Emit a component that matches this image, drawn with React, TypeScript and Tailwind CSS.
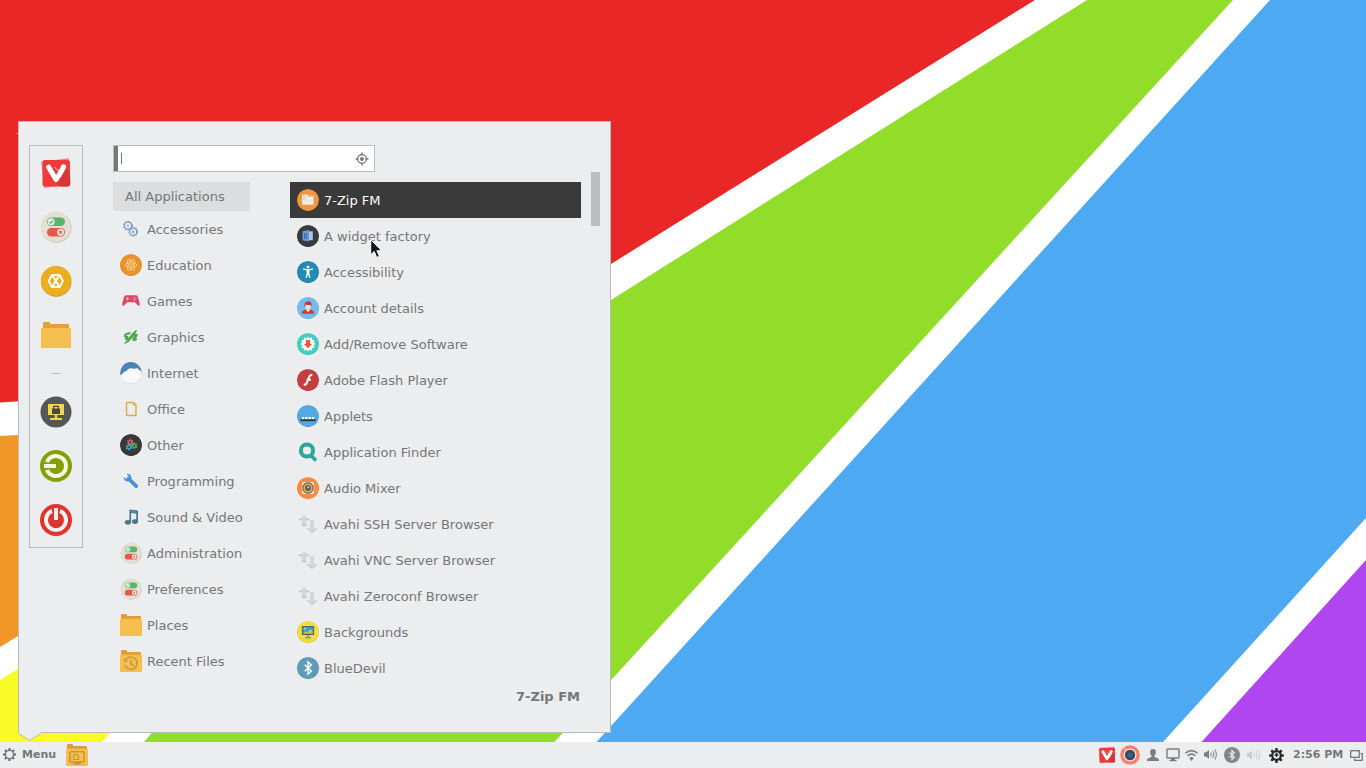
import React from "react";

type IconProps = { size?: number };

const Svg = ({ size = 22, box = 22, children }: { size?: number; box?: number; children: React.ReactNode }) => (
  <svg width={size} height={size} viewBox={`0 0 ${box} ${box}`} className="block shrink-0" fill="none">
    {children}
  </svg>
);

const gearPath = (cx: number, cy: number, inner: number, outer: number, teeth: number) => {
  const pts: string[] = [];
  for (let i = 0; i < teeth; i++) {
    const a = (i / teeth) * Math.PI * 2 - Math.PI / 2;
    const w = Math.PI / teeth;
    [[-0.62, inner], [-0.38, outer], [0.38, outer], [0.62, inner]].forEach(([k, r]) => {
      pts.push(`${(cx + Math.cos(a + k * w) * r).toFixed(2)},${(cy + Math.sin(a + k * w) * r).toFixed(2)}`);
    });
  }
  return `M${pts.join("L")}Z`;
};

const holePath = (cx: number, cy: number, r: number) =>
  `M${cx + r} ${cy}a${r} ${r} 0 1 0 ${-2 * r} 0 ${r} ${r} 0 1 0 ${2 * r} 0Z`;

const Vivaldi = ({ size = 32 }: IconProps) => (
  <Svg size={size} box={32}>
    <path d="M1.2 4.800 28.800 1.300 30.800 27 4.200 31Z" fill="#f28583" />
    <rect x="2.500" y="3" width="27.500" height="26.500" rx="2.500" fill="#ee3a3b" />
    <path d="M25.500 11 30 15.500v11.500q0 2.500-2.500 2.500H20L16.500 25Z" fill="#d93437" />
    <path d="M8.700 10.200 16 22.600Q19.500 18 22.600 12" stroke="#fff" strokeWidth="5" strokeLinecap="round" strokeLinejoin="round" />
    <circle cx="23.400" cy="9.900" r="2.700" fill="#fff" />
    <path d="M14.500 10q3.500 5.200 7.500 3" stroke="#fff" strokeWidth=".8" />
  </Svg>
);

const Toggles = ({ size = 22 }: IconProps) => (
  <Svg size={size} box={32}>
    <circle cx="16.4" cy="16.6" r="15.2" fill="#c8c7bd" />
    <circle cx="15.9" cy="15.8" r="15" fill="#e2e0d3" />
    <rect x="7" y="6.500" width="18" height="8.500" rx="4.200" fill="#57b66c" />
    <circle cx="11.200" cy="10.800" r="3.500" fill="#eaf2e6" />
    <path d="m9.500 10.800 1.300 1.400 2.300-2.700" stroke="#57b66c" strokeWidth="1.200" />
    <rect x="7" y="17" width="18" height="8.500" rx="4.200" fill="#eb564b" />
    <circle cx="20.600" cy="21.300" r="3.500" fill="#f8e6e1" />
    <path d="m19.200 19.900 2.800 2.800m0-2.800-2.800 2.800" stroke="#eb564b" strokeWidth="1.200" />
  </Svg>
);

const HexX = () => (
  <Svg size={32} box={32}>
    <circle cx="16.2" cy="16.5" r="15.3" fill="#c8941f" />
    <circle cx="16" cy="15.9" r="15" fill="#ebae1c" />
    <path d="M8.700 16 12 10h7.600L22.900 16l-3.300 6H12Z" stroke="#fff" strokeWidth="2" strokeLinejoin="round" />
    <path d="m12.200 10 7.200 12m0-12-7.200 12" stroke="#fff" strokeWidth="2" />
  </Svg>
);

const BigFolder = () => (
  <Svg size={32} box={32}>
    <path d="M3 4q0-1 1-1h5q1 0 1 1v1h18q1 0 1 1v4H3Z" fill="#e79f3b" />
    <rect x="1" y="9" width="30" height="20" rx="1.200" fill="#f4bf4f" />
  </Svg>
);

const LockScreen = () => (
  <Svg size={32} box={32}>
    <circle cx="16" cy="16" r="15.500" fill="#565656" />
    <path d="M8 8h16v11H8Zm6.800 11h2.400v3H22v2H10v-2h4.800Z" fill="#f3d653" />
    <path d="M12 12.500h8V18h-8Z" fill="#474747" />
    <path d="M13.700 13v-2.600h4.600V13" stroke="#474747" strokeWidth="1.300" />
  </Svg>
);

const Logout = () => (
  <Svg size={32} box={32}>
    <circle cx="16" cy="16" r="16" fill="#859f05" />
    <path d="M6.830 12A10 10 0 1 1 6.830 20" stroke="#f4f8e4" strokeWidth="4" />
    <path d="M4 14h12v4H4Z" fill="#f4f8e4" />
  </Svg>
);

const Power = () => (
  <Svg size={32} box={32}>
    <circle cx="16" cy="16" r="16" fill="#dd3530" />
    <path d="M12 6.830A10 10 0 1 0 20 6.830" stroke="#fdf0ef" strokeWidth="4" />
    <path d="M14 4h4v12h-4Z" fill="#fdf0ef" />
  </Svg>
);

const Gears = () => (
  <Svg>
    <circle cx="8" cy="7.700" r="3.500" stroke="#7ea0c8" strokeWidth="1.200" />
    <circle cx="8" cy="7.700" r="4.400" stroke="#7ea0c8" strokeWidth="1.100" strokeDasharray="1.500 1.330" />
    <circle cx="8" cy="7.700" r="1" fill="#7ea0c8" />
    <circle cx="13.200" cy="13.700" r="3.500" stroke="#7ea0c8" strokeWidth="1.200" />
    <circle cx="13.200" cy="13.700" r="4.400" stroke="#7ea0c8" strokeWidth="1.100" strokeDasharray="1.500 1.330" />
    <circle cx="13.200" cy="13.700" r="1.200" fill="#7ea0c8" />
  </Svg>
);

const Disc = ({ color, shade, children }: { color: string; shade?: string; children?: React.ReactNode }) => (
  <Svg>
    <circle cx="11" cy="11.200" r="10.800" fill={shade ?? color} />
    <circle cx="11" cy="10.800" r="10.600" fill={color} />
    {children}
  </Svg>
);

const Education = () => (
  <Disc color="#e8932b" shade="#d98721">
    <g stroke="#f8cf94" strokeWidth="0.900">
      <ellipse cx="11" cy="11" rx="5.800" ry="2.400" />
      <ellipse cx="11" cy="11" rx="5.800" ry="2.400" transform="rotate(60 11 11)" />
      <ellipse cx="11" cy="11" rx="5.800" ry="2.400" transform="rotate(120 11 11)" />
    </g>
    <circle cx="11" cy="11" r="1" fill="#f8cf94" />
  </Disc>
);

const Games = () => (
  <Svg>
    <path d="M6 5.300h10q1.500 0 2.100 2l1.500 6q.6 2.700-.7 2.700-1 0-2.700-2.400l-1.300-1.400H7.100l-1.300 1.400Q4 16 3 16q-1.300 0-.7-2.700l1.600-6q.6-2 2.100-2Z" fill="#d84a63" />
    <path d="M7.400 7.300v3M5.900 8.800h3" stroke="#f4cbd2" strokeWidth="0.900" />
    <circle cx="14.500" cy="7.500" r=".6" fill="#f4cbd2" />
    <circle cx="13.200" cy="8.900" r=".6" fill="#f4cbd2" />
    <circle cx="15.800" cy="8.900" r=".6" fill="#f4cbd2" />
    <circle cx="14.500" cy="10.200" r=".6" fill="#f4cbd2" />
  </Svg>
);

const Graphics = () => (
  <Svg>
    <path d="M16.500 4.300Q12 8 9 12.500L5.500 17q3.500-1.300 5-4.200Q14 8.500 16.500 4.300Z" fill="#4ca94f" stroke="#4ca94f" strokeWidth="1.200" />
    <path d="M10.500 7Q6 7.500 5 9.300t3.300 1.500Q5 12 6 13.200q2.500.600 5-1.200M13 9q4-1.300 3.700.300-.3 1.500-3.500 2.200M12.500 12.500q3.500-.800 3.500.5t-3.500.800" stroke="#4ca94f" strokeWidth="2" />
  </Svg>
);

const Internet = () => (
  <Svg>
    <circle cx="11.100" cy="11.500" r="10.500" fill="#cfcfcf" />
    <path d="M.5 13.200A10.700 10.700 0 1 1 21.600 11.500L11 14Z" fill="#4f82b8" />
    <path d="M.53 13q2.200-.3 2.800-2.500Q5 9 6.500 9 7.500 6.500 11 6.300q1.800-.2 2.800.700 2-1.200 4-.6 1 .5 1.200 1.700 2 .2 2.700 2.700A10.700 10.700 0 0 1 .53 13Z" fill="#f8f8f8" />
  </Svg>
);

const Office = () => (
  <Svg>
    <path d="M6.500 5.500q0-1 1-1h6l2.500 2.500v9.500q0 1-1 1H7.500q-1 0-1-1Z" stroke="#dfa845" strokeWidth="1.400" />
    <path d="M13 4.500V7.500H16Z" fill="#dfa845" />
  </Svg>
);

const Other = () => (
  <Disc color="#383838" shade="#2e2e2e">
    <path fillRule="evenodd" d={gearPath(10.200, 8.200, 2.400, 3.400, 6) + holePath(10.200, 8.200, 1)} fill="#e45d6c" />
    <path fillRule="evenodd" d={gearPath(8.800, 13.200, 2.400, 3.400, 6) + holePath(8.800, 13.200, 1)} fill="#31a6d6" />
    <path fillRule="evenodd" d={gearPath(14.200, 11.700, 2.400, 3.400, 6) + holePath(14.200, 11.700, 1)} fill="#4bb556" />
  </Disc>
);

const Wrench = () => (
  <Svg>
    <path d="m8.500 8.500 7.700 7.700" stroke="#4a90d6" strokeWidth="3.800" strokeLinecap="round" />
    <path d="M6.500 3.900q4.400-.4 5 4.100-.2 3.400-3.400 3.600Q4 11.300 3.500 7l2.700 2 2.300-.7.500-2Z" fill="#4a90d6" />
  </Svg>
);

const Music = () => (
  <Svg>
    <path d="M9.400 3.600 18 4.500v10.900h-1.700V7.800l-5.200-.7v10H9.400Z" fill="#48778c" />
    <ellipse cx="7.900" cy="16.300" rx="3.100" ry="2.400" fill="#48778c" />
    <ellipse cx="15" cy="15.600" rx="3" ry="2.400" fill="#48778c" />
    <path d="m11 5.500 5.300.7" stroke="#8cabb8" strokeWidth=".6" />
  </Svg>
);

const Folder = ({ children }: { children?: React.ReactNode }) => (
  <Svg>
    <path d="M1 1q0-1 1-1h4q1 0 1 1v1h13q1 0 1 1v4H1Z" fill="#e39d37" />
    <rect x="0" y="4.800" width="22" height="17.200" rx="1.200" fill="#f4bf4f" />
    {children}
  </Svg>
);

const Recent = () => (
  <Folder>
    <path d="M5.500 10.100A6.200 6.200 0 1 1 5 15.200" stroke="#cb9b3c" strokeWidth="1.700" />
    <path d="M3.800 7.700v4.200H8Z" fill="#cb9b3c" />
    <path d="M11 9.800v4l2.700 2" stroke="#cb9b3c" strokeWidth="1.700" />
  </Folder>
);

const DesktopFolder = () => (
  <Folder>
    <rect x="3.800" y="7.800" width="14.400" height="10.200" rx="1.200" stroke="#c5973a" strokeWidth="1.600" />
    <path d="M7.500 18h7v2.500h-7Z" fill="#c5973a" />
    <path d="M7.800 10.500h3l1.700 1.800v3.200H7.800Z" stroke="#c5973a" strokeWidth="1.200" />
  </Folder>
);

const Zip = () => (
  <Disc color="#ed9840" shade="#d98732">
    <path d="M5 6.300q0-.8.800-.8h4.700l1 1.300h5v8q0 1-1 1H5.800q-.8 0-.8-1Z" fill="#f2ebe3" />
    <path d="M6.800 6v5.500M8.600 6.500v5" stroke="#c9b49c" strokeWidth="1" strokeDasharray="1 1" />
    <path d="M10.500 7.600h6" stroke="#dcc5ab" strokeWidth="1" />
  </Disc>
);

const Widget = () => (
  <Disc color="#383a3d" shade="#2b2d30">
    <path d="M5.500 6.300 11.800 5v11.500l-6.300-1.200Z" fill="#6d9cd6" />
    <path d="M11.800 6.300h4v9h-4Z" fill="#a8c7ec" />
    <path d="M7.500 8.500h2v4.600h-2Z" stroke="#3d69a8" strokeWidth="1" />
  </Disc>
);

const Accessibility = () => (
  <Disc color="#258ab3" shade="#1d789d">
    <circle cx="11" cy="5.900" r="1.500" fill="#f0f7fa" />
    <path d="m6 7.800 3.700 1h2.600l3.700-1" stroke="#f0f7fa" strokeWidth="1.300" />
    <path d="M9.600 8.700h2.800v4l1.200 4.100-1.300.3-1.300-3.600-1.300 3.600-1.300-.3 1.200-4.100Z" fill="#f0f7fa" />
  </Disc>
);

const Account = () => (
  <Disc color="#74bbee" shade="#67a9d9">
    <path d="M4.800 16.800q.2-3.800 4.400-4.200h3.600q4.200.4 4.400 4.200Z" fill="#d33736" />
    <path d="M9.300 11.500h3.400v2L11 15.200l-1.700-1.700Z" fill="#f1d6cf" />
    <ellipse cx="11" cy="8.700" rx="3" ry="3.500" fill="#f4dcd6" />
    <path d="M7.500 9Q7 4.800 10.500 4.400q4-.6 4 3.200l-.4 2.400-.6-2q-2.800.4-4.700-.8L8.300 10Z" fill="#c93438" />
  </Disc>
);

const Software = () => (
  <Disc color="#42cec0" shade="#36baae">
    <path d={gearPath(11, 11, 6.100, 7.300, 12)} fill="#f3f5ef" />
    <path d="M9 7h4v4h2L11 15.200 7 11h2Z" fill="#e9573e" />
  </Disc>
);

const Flash = () => (
  <Disc color="#c34042" shade="#af3538">
    <path d="M15.300 5.800q-2.500.100-3.400 2.900l-1.800 4.400q-.8 2.600-3.300 2.800M9.600 10.700h4.300" stroke="#fff" strokeWidth="1.900" />
  </Disc>
);

const Applets = () => (
  <Disc color="#55a8e5" shade="#4696d1">
    <path d="M3.500 14h15v2.200h-15Z" fill="#30363b" />
    <path d="M5 12h2.300v2.300H5Zm3.300 0h2.300v2.300H8.300Zm3.300 0h2.300v2.300h-2.300Zm3.300 0h2.300v2.300h-2.300Z" fill="#fff" />
  </Disc>
);

const Finder = () => (
  <Svg>
    <circle cx="10" cy="9.500" r="6.100" stroke="#2aa69a" strokeWidth="4" />
    <path d="m14.400 15 3.600 3.500" stroke="#2aa69a" strokeWidth="3.700" strokeLinecap="round" />
  </Svg>
);

const Mixer = () => (
  <Disc color="#fb8b43" shade="#ed7932">
    <rect x="5" y="5" width="12" height="12" rx="1.500" fill="#f3d9bd" />
    <circle cx="11" cy="11" r="5.700" fill="#5d635f" />
    <circle cx="11" cy="11" r="4.600" fill="#e9ad54" />
    <circle cx="11" cy="11" r="2.900" fill="#555d61" />
    <circle cx="11.300" cy="10.300" r="1" fill="#d7d7d0" />
  </Disc>
);

const Avahi = () => (
  <Svg>
    <path d="m7 2 5 4.800H9.300V13H4.800V6.800H2Z" fill="#d7d7d7" />
    <path d="M2 6.600h2.800M9.300 6.600H12M4.800 12.600h4.500" stroke="#b5b6b6" strokeWidth=".9" />
    <path d="M13 7h4v8.200h3L15 20l-5-4.800h3Z" fill="#d6d7d7" />
    <path d="m10.200 15.200 4.800 4.500 4.800-4.500" stroke="#bcbdbd" strokeWidth="1" />
  </Svg>
);

const Backgrounds = () => (
  <Disc color="#f1de37" shade="#dac530">
    <path d="M5.500 5.600h11v7.800h-11Z" fill="#2aa7e8" />
    <path d="m6 12.800 2.500-2.600 1.800 1.500 3-3.500 2.600 2.500v2.100Z" fill="#efbd2e" />
    <circle cx="7.700" cy="7.500" r="1.100" fill="#f5dc37" />
    <path d="M5.500 5.600h11v7.800h-11Z" stroke="#566873" strokeWidth="1.200" />
    <path d="M9.700 14h2.600v2H14v1.400H8V16h1.700Z" fill="#9a9d86" />
  </Disc>
);

const btPath = "m7.700 7.800 6.600 6.200-3.300 3V5l3.300 3-6.600 6.200";
const Bluetooth = () => (
  <Disc color="#5e9cb9" shade="#508ba7">
    <path d={btPath} stroke="#f5fafb" strokeWidth="1.500" />
  </Disc>
);

const Target = () => (
  <Svg size={14} box={14}>
    <circle cx="7" cy="7" r="4.400" stroke="#74777a" strokeWidth="1.200" />
    <circle cx="7" cy="7" r="2" fill="#74777a" />
    <path d="M7 .5v3M7 10.500v3M.5 7h3M10.500 7h3" stroke="#74777a" strokeWidth="1.400" />
  </Svg>
);

const categories: [string, React.ReactNode][] = [
  ["Accessories", <Gears />],
  ["Education", <Education />],
  ["Games", <Games />],
  ["Graphics", <Graphics />],
  ["Internet", <Internet />],
  ["Office", <Office />],
  ["Other", <Other />],
  ["Programming", <Wrench />],
  ["Sound & Video", <Music />],
  ["Administration", <Toggles />],
  ["Preferences", <Toggles />],
  ["Places", <Folder />],
  ["Recent Files", <Recent />],
];

const apps: [string, React.ReactNode][] = [
  ["7-Zip FM", <Zip />],
  ["A widget factory", <Widget />],
  ["Accessibility", <Accessibility />],
  ["Account details", <Account />],
  ["Add/Remove Software", <Software />],
  ["Adobe Flash Player", <Flash />],
  ["Applets", <Applets />],
  ["Application Finder", <Finder />],
  ["Audio Mixer", <Mixer />],
  ["Avahi SSH Server Browser", <Avahi />],
  ["Avahi VNC Server Browser", <Avahi />],
  ["Avahi Zeroconf Browser", <Avahi />],
  ["Backgrounds", <Backgrounds />],
  ["BlueDevil", <Bluetooth />],
];

const Slot = ({ children }: { children: React.ReactNode }) => (
  <div className="flex h-[54px] items-center justify-center">{children}</div>
);

const Wallpaper = () => (
  <svg className="absolute inset-0" width="1366" height="768" viewBox="0 0 1366 768">
    <rect width="1366" height="768" fill="#fff" />
    <path d="M0 0h1035L611 264 200 390 0 402.500Z" fill="#e92727" />
    <path d="M1087 0h146L554.500 742H144L300 560 611 300Z" fill="#91dd2a" />
    <path d="M1270 0h96v518L1163 742H596.500Z" fill="#4ea9f3" />
    <path d="M1366 560v208h-188Z" fill="#b046f0" />
    <path d="m0 436 18-1 182-10v100L0 647Z" fill="#f09728" />
    <path d="M0 680 18 669 160 590v85L102 742H0Z" fill="#f9fb29" />
    <rect x="17" y="133" width="1" height="1" fill="#fff" />
  </svg>
);

const Sidebar = () => (
  <div className="h-[403px] w-[54px] border border-[#bbbcbe]">
    <Slot><Vivaldi /></Slot>
    <Slot><Toggles size={32} /></Slot>
    <Slot><HexX /></Slot>
    <Slot><BigFolder /></Slot>
    <div className="flex h-[23px] items-center justify-center">
      <div className="h-px w-2 bg-[#bbbcbe]" />
    </div>
    <Slot><LockScreen /></Slot>
    <Slot><Logout /></Slot>
    <Slot><Power /></Slot>
  </div>
);

const Menu = () => (
  <div className="absolute top-[121px] left-[18px] flex h-[612px] w-[593px] border border-[#b9babc] bg-[#ebedee] pt-[23px] pl-[10px]">
    <Sidebar />
    <div className="ml-[30px] flex w-[487px] flex-col">
      <div className="flex h-[27px] w-[262px] items-center border border-[#bbbcbe] bg-white pr-[5px]">
        <div className="h-full w-1 bg-[#77787a]" />
        <div className="ml-[3px] h-[11px] w-px bg-[#77787a]" />
        <div className="ml-auto"><Target /></div>
      </div>
      <div className="mt-[10px] flex">
        <div className="w-[137px]">
          <div className="flex h-[29px] items-center bg-[#dcddde] pl-3">All Applications</div>
          {categories.map(([name, icon]) => (
            <div key={name} className="flex h-9 items-center gap-[5px] pl-[7px] whitespace-nowrap">
              {icon}
              <span className="pt-px">{name}</span>
            </div>
          ))}
        </div>
        <div className="ml-10 w-[291px]">
          {apps.map(([name, icon], i) => (
            <div
              key={name}
              className={
                i === 0
                  ? "flex h-9 items-center gap-[5px] bg-[#3a3a3a] pl-[7px] text-white"
                  : "flex h-9 items-center gap-[5px] pl-[7px]"
              }
            >
              {icon}
              <span className="pt-px">{name}</span>
            </div>
          ))}
          <div className="flex h-5 items-center justify-end pr-px font-bold">7-Zip FM</div>
        </div>
        <div className="-mt-[10px] ml-[10px] h-[54px] w-[9px] bg-[#bcbdbf]" />
      </div>
    </div>
    <svg className="absolute top-[610px] -left-px" width="24" height="10" viewBox="0 0 24 10">
      <path d="M1 0h22v1.500L11.500 8.500 1 1.500Z" fill="#ebedee" />
      <path d="M.5 1.300 11.500 8.500 22.500 1.500" fill="none" stroke="#b9babc" />
    </svg>
  </div>
);

const Panel = () => (
  <div className="relative flex h-[26px] items-center bg-[#ebedee] text-[11px] font-bold">
    <div className="flex items-center pl-[3px]">
      <div className="pb-px">
        <Svg size={13} box={13}>
          <path fillRule="evenodd" d={gearPath(6.500, 6.500, 4.700, 6.500, 8) + holePath(6.500, 6.500, 3.400)} fill="#6d6f71" />
        </Svg>
      </div>
      <span className="ml-[6px] w-[44px] pb-[2px]">Menu</span>
      <DesktopFolder />
    </div>
    <div className="ml-auto flex items-center">
      <Vivaldi size={18} />
      <div className="ml-[4px]">
        <Svg size={20} box={20}>
          <circle cx="10" cy="10" r="9.800" fill="#fb7e6e" />
          <circle cx="10" cy="10" r="6.500" fill="#f5e5e1" />
          <circle cx="10" cy="10" r="5.200" fill="#334c61" />
          <circle cx="10" cy="10" r="2.500" fill="#465f76" />
          <circle cx="4.700" cy="3.800" r="1" fill="#fbc95c" />
        </Svg>
      </div>
      <div className="ml-[7px]">
        <Svg size={12} box={12}>
          <path d="M6 0q2.900.1 2.900 3.200 0 2-1.400 3.600v1.200l3.800 1.500q.6.300.6 2.500H.1q0-2.200.6-2.500l3.800-1.500V6.800Q3.100 5.200 3.100 3.200 3.100.1 6 0Z" fill="#7b7c7e" />
        </Svg>
      </div>
      <div className="ml-[7px]">
        <Svg size={14} box={14}>
          <rect x="1" y="1" width="12" height="9" rx=".8" stroke="#7b7c7e" strokeWidth="1.400" />
          <path d="M5 10h4v2h1.500v1.300h-7V12H5Z" fill="#7b7c7e" />
        </Svg>
      </div>
      <div className="ml-[5px]">
        <Svg size={13} box={13}>
          <path d="M.5 4.200Q6.500-.8 12.500 4.200M2.600 6.700q3.900-3.200 7.800 0" stroke="#7b7c7e" strokeWidth="1.600" />
          <path d="M4.200 8.900q2.300-1.700 4.600 0L6.500 12Z" fill="#7b7c7e" />
        </Svg>
      </div>
      <div className="ml-[6px] -mt-px">
        <Svg size={13} box={13}>
          <path d="M0 4.500h2L5 2v9L2 8.500H0Z" fill="#7b7c7e" />
          <path d="M6.600 4.500q1.300 2 0 4M8.700 3q2.300 3.500 0 7M10.900 1.500q3 5 0 10" stroke="#8c8d8f" strokeWidth="1.100" />
        </Svg>
      </div>
      <div className="ml-[7px]">
        <Svg size={16} box={22}>
          <circle cx="11" cy="11" r="11" fill="#858687" />
          <path d={btPath} stroke="#ebedee" strokeWidth="1.600" />
        </Svg>
      </div>
      <div className="ml-[7px]">
        <Svg size={14} box={14}>
          <path d="M0 5h2l3-2.500v9L2 9H0Z" fill="#c9cacb" />
          <path d="M6.800 5q1.300 2 0 4M9 3.500q2.300 3.500 0 7M11.300 2q3 5 0 10" stroke="#cecfd0" strokeWidth="1.100" />
        </Svg>
      </div>
      <div className="ml-[8px]">
        <Svg size={15} box={15}>
          <path fillRule="evenodd" d={gearPath(7.500, 7.500, 5.500, 7.500, 8) + holePath(7.500, 7.500, 3.200)} fill="#29292a" />
          <path d="M7.500 4.500 10 7.500H8.200V9H6.800V7.500H5Z" fill="#29292a" />
        </Svg>
      </div>
      <span className="ml-[9px] w-[51px] pb-[2px] whitespace-nowrap">2:56 PM</span>
      <div className="ml-[6px] mr-[3px]">
        <Svg size={13} box={13}>
          <rect x=".7" y="1.700" width="8.600" height="6.600" stroke="#77787a" strokeWidth="1.300" />
          <path d="M10.500 4.700h1.800v6.600H4.700V9.500" stroke="#77787a" strokeWidth="1.300" />
        </Svg>
      </div>
    </div>
  </div>
);

export default function App() {
  return (
    <div className="relative flex h-[768px] w-[1366px] flex-col justify-end overflow-hidden font-['DejaVu_Sans',sans-serif] text-[13px] leading-none text-[#74777a]">
      <Wallpaper />
      <Panel />
      <Menu />
      <svg className="absolute top-[239px] left-[370px]" width="13" height="20" viewBox="0 0 13 20">
        <path d="M.7.800v15l3.500-3.300 2.600 6 2.700-1.200-2.600-5.600h5Z" fill="#151515" stroke="#fff" strokeWidth="1" />
      </svg>
    </div>
  );
}
